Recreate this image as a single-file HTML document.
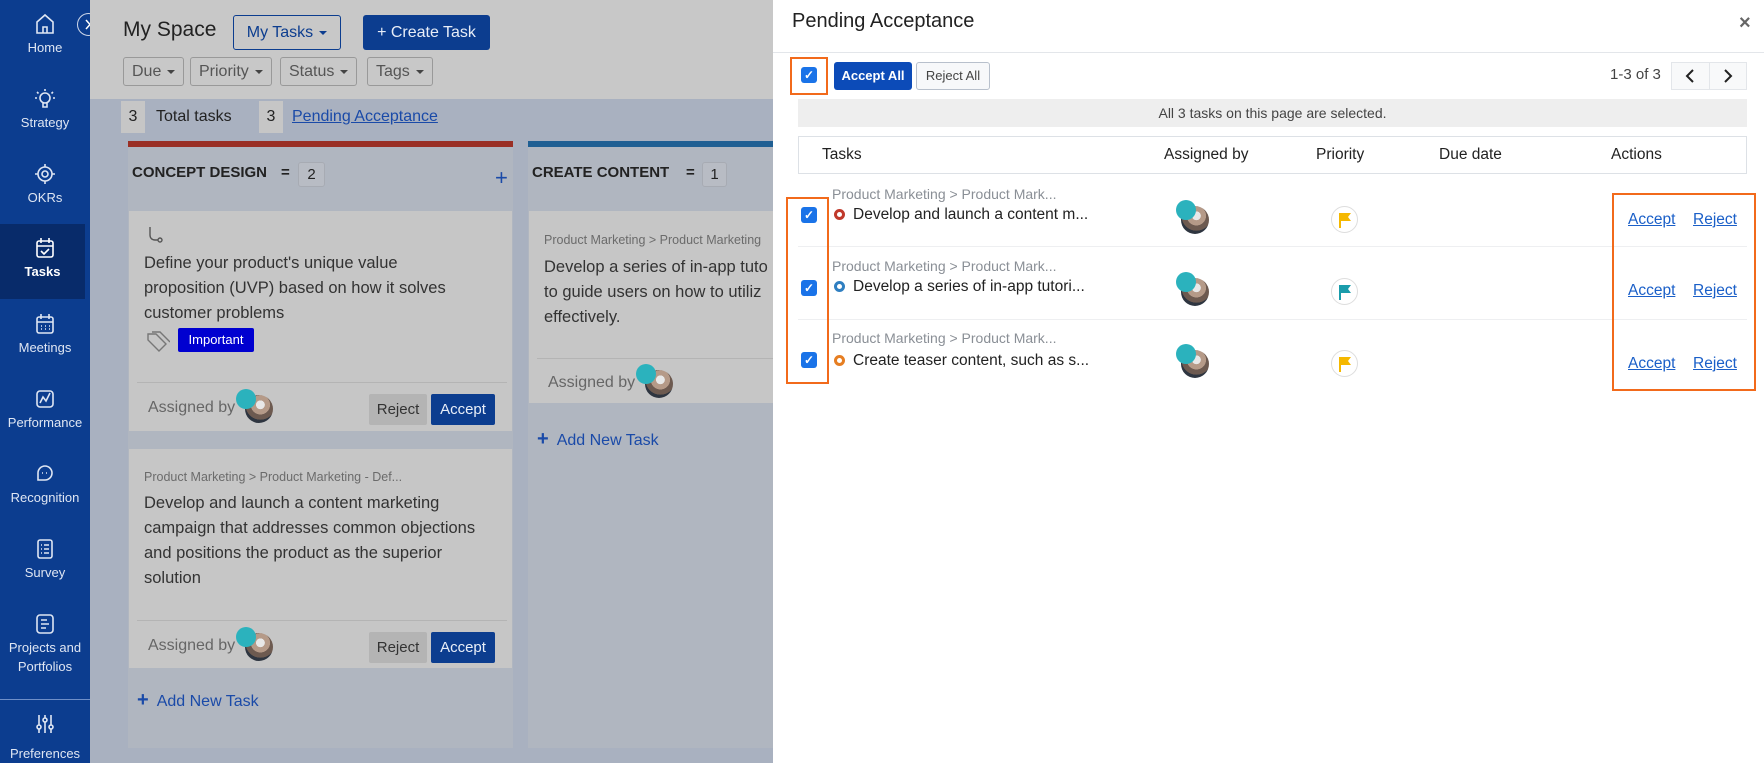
<!DOCTYPE html>
<html><head><meta charset="utf-8"><style>
*{box-sizing:border-box;margin:0;padding:0}
html{width:1764px;height:763px;overflow:hidden;background:#a9b1c0}
body{width:1764px;height:763px;overflow:hidden;font-family:"Liberation Sans",sans-serif;position:relative;background:#a9b1c0;color:#222}
.abs{position:absolute}
.side{left:0;top:0;width:90px;height:763px;background:#0c3d8f}
.item{position:absolute;left:0;width:90px;height:75px;color:#dfe6f3;font-size:13px;text-align:center}
.item svg{position:absolute;left:35px;top:13px}
.item span{position:absolute;left:0;right:0;top:38px;line-height:19px}
.hdr{left:90px;top:0;width:683px;height:99px;background:#c8c8c8}
.btn{position:absolute;border:1px solid #999;border-radius:3px;font-size:16px;color:#555;padding:0 8px;line-height:27px;background:#c8c8c8}
.car{display:inline-block;border-left:4px solid transparent;border-right:4px solid transparent;border-top:4px solid #444;vertical-align:middle;margin-left:6px}
.col{background:#b0b6c0}
.card{position:absolute;background:#c6c6c6}
.txt{font-size:16.5px;line-height:25px;color:#333;white-space:nowrap}
.bc{font-size:12.5px;color:#6b6b6b;white-space:nowrap}
.av{position:absolute;width:28px;height:28px;border-radius:50%;background:radial-gradient(circle at 55% 35%,#e8e8e8 0 18%,#b59a88 19% 40%,#6d5a50 41% 62%,#2e3540 63%)}
.av i{position:absolute;left:-9px;top:-6px;width:20px;height:20px;border-radius:50%;background:#2bb2bd}
.panel{left:773px;top:0;width:991px;height:763px;background:#fff}
.cb{position:absolute;width:16px;height:16px;border-radius:3px;background:#1a73e8;color:#fff;font-size:12px;line-height:16px;text-align:center;font-weight:bold}
.ob{position:absolute;border:2px solid #f26a1b}
.th{position:absolute;top:146px;font-size:15.5px;color:#222}
.lnk{position:absolute;color:#1a5fc8;text-decoration:underline;font-size:15.5px}
.dot{display:inline-block;width:11px;height:11px;border-radius:50%;border:3px solid;vertical-align:-1px;margin-right:8px}
.flag{position:absolute;width:27px;height:27px;border:1px solid #ddd;border-radius:50%}
</style></head><body>
<div class="abs side">
 <div class="item" style="top:0"><svg width="20" height="22" viewBox="0 0 20 22" fill="none" stroke="#dfe6f3" stroke-width="1.6"><path d="M2 9L10 2l8 7v11H2z"/><path d="M8 20v-6h4v6"/></svg><span>Home</span></div>
 <div class="item" style="top:75px"><svg width="20" height="22" viewBox="0 0 20 22" fill="none" stroke="#dfe6f3" stroke-width="1.6"><circle cx="10" cy="10" r="5"/><path d="M8 15v4h4v-4M10 1v2M2 4l1.5 1.5M18 4l-1.5 1.5M0 10h2M18 10h2"/></svg><span>Strategy</span></div>
 <div class="item" style="top:150px"><svg width="20" height="22" viewBox="0 0 20 22" fill="none" stroke="#dfe6f3" stroke-width="1.6"><circle cx="10" cy="11" r="7"/><circle cx="10" cy="11" r="3"/><path d="M10 1v3M10 18v3M0 11h3M17 11h3"/></svg><span>OKRs</span></div>
 <div class="item" style="top:224px;background:#082b6a;width:85px;color:#fff;font-weight:bold"><svg width="20" height="22" viewBox="0 0 20 22" fill="none" stroke="#fff" stroke-width="1.6"><rect x="2" y="4" width="16" height="16" rx="2"/><path d="M2 9h16M6 1v5M14 1v5M6 14l3 3 5-5"/></svg><span>Tasks</span></div>
 <div class="item" style="top:300px"><svg width="20" height="22" viewBox="0 0 20 22" fill="none" stroke="#dfe6f3" stroke-width="1.6"><rect x="2" y="4" width="16" height="16" rx="2"/><path d="M2 9h16M6 1v5M14 1v5M6 13h1M10 13h1M14 13h1M6 16h1M10 16h1M14 16h1"/></svg><span>Meetings</span></div>
 <div class="item" style="top:375px"><svg width="20" height="22" viewBox="0 0 20 22" fill="none" stroke="#dfe6f3" stroke-width="1.6"><rect x="2" y="3" width="16" height="16" rx="3"/><path d="M5 15l3-6 3 4 4-8"/></svg><span>Performance</span></div>
 <div class="item" style="top:450px"><svg width="20" height="22" viewBox="0 0 20 22" fill="none" stroke="#dfe6f3" stroke-width="1.6"><path d="M3 17V10a7 7 0 1 1 7 7z"/><path d="M7 10h1M11 10h1"/></svg><span>Recognition</span></div>
 <div class="item" style="top:525px"><svg width="20" height="22" viewBox="0 0 20 22" fill="none" stroke="#dfe6f3" stroke-width="1.6"><rect x="3" y="2" width="14" height="18" rx="2"/><path d="M6 7h1M9 7h5M6 11h1M9 11h5M6 15h1M9 15h5"/></svg><span>Survey</span></div>
 <div class="item" style="top:600px"><svg width="20" height="22" viewBox="0 0 20 22" fill="none" stroke="#dfe6f3" stroke-width="1.6"><rect x="2" y="2" width="16" height="18" rx="3"/><path d="M6 7h6M6 11h8M6 15h5"/></svg><span>Projects and<br>Portfolios</span></div>
 <div class="abs" style="left:0;top:699px;width:90px;height:1px;background:#6f8fc8"></div>
 <div class="item" style="top:700px"><svg width="20" height="22" viewBox="0 0 20 22" fill="none" stroke="#dfe6f3" stroke-width="1.6"><path d="M4 2v18M10 2v18M16 2v18"/><circle cx="4" cy="14" r="2" fill="#0c3d8f"/><circle cx="10" cy="7" r="2" fill="#0c3d8f"/><circle cx="16" cy="14" r="2" fill="#0c3d8f"/></svg><span style="top:44px">Preferences</span></div>
</div>
<div class="abs" style="left:77px;top:13px;width:23px;height:23px;border-radius:50%;background:#0c3d8f;border:1.5px solid #cfd8ea"><svg style="position:absolute;left:6px;top:5px" width="8" height="11" viewBox="0 0 8 11" fill="none" stroke="#fff" stroke-width="1.5"><path d="M2 1l4 4.5L2 10"/></svg></div>
<div class="abs hdr"></div>
<div class="abs" style="left:123px;top:18px;font-size:21px;color:#222">My Space</div>
<div class="btn" style="left:233px;top:15px;height:35px;line-height:33px;border-color:#0c3d8f;color:#0c3d8f;width:108px;text-align:center">My Tasks<span class="car" style="border-top-color:#0c3d8f"></span></div>
<div class="btn" style="left:363px;top:15px;height:35px;line-height:35px;border:none;background:#0c3d8f;color:#e8eef8;width:127px;text-align:center">+ Create Task</div>
<div class="btn" style="left:123px;top:57px;height:29px">Due<span class="car"></span></div>
<div class="btn" style="left:190px;top:57px;height:29px">Priority<span class="car"></span></div>
<div class="btn" style="left:280px;top:57px;height:29px">Status<span class="car"></span></div>
<div class="btn" style="left:367px;top:57px;height:29px">Tags<span class="car"></span></div>
<div class="abs" style="left:121px;top:101px;width:24px;height:32px;background:#c6c6c6;font-size:16px;line-height:32px;text-align:center">3</div>
<div class="abs" style="left:156px;top:101px;font-size:16px;line-height:32px">Total tasks</div>
<div class="abs" style="left:259px;top:101px;width:24px;height:32px;background:#c6c6c6;font-size:16px;line-height:32px;text-align:center">3</div>
<div class="abs" style="left:292px;top:101px;font-size:16px;line-height:32px;color:#1a4aa8;text-decoration:underline">Pending Acceptance</div>

<div class="abs col" style="left:128px;top:141px;width:385px;height:607px;border-top:6px solid #9a2f25"></div>
<div class="abs" style="left:132px;top:164px;font-size:15px;font-weight:bold">CONCEPT DESIGN</div>
<div class="abs" style="left:281px;top:164px;font-size:15px;font-weight:bold">=</div>
<div class="abs" style="left:298px;top:162px;width:27px;height:25px;border:1px solid #a7abb3;border-radius:3px;background:#b8bcc4;text-align:center;line-height:23px;font-size:15px">2</div>
<div class="abs" style="left:495px;top:165px;font-size:22px;color:#1a4aa8">+</div>
<div class="card" style="left:129px;top:211px;width:383px;height:220px"></div>
<svg class="abs" style="left:147px;top:226px" width="16" height="18" viewBox="0 0 16 18" fill="none" stroke="#555" stroke-width="1.4"><path d="M3 1v8c0 3 2 5 5 5h3"/><circle cx="13" cy="14" r="2"/></svg>
<div class="abs txt" style="left:144px;top:251px">Define your product's unique value<br>proposition (UVP) based on how it solves<br>customer problems</div>
<svg class="abs" style="left:146px;top:331px" width="24" height="22" viewBox="0 0 24 22" fill="none" stroke="#777" stroke-width="1.4"><path d="M2 3l8 0 10 10-7 7-11-11z"/><path d="M6 1l8 0 10 10"/></svg>
<div class="abs" style="left:178px;top:328px;width:76px;height:24px;background:#0000d0;border-radius:2px;color:#fff;font-size:13px;line-height:24px;text-align:center">Important</div>
<div class="abs" style="left:137px;top:382px;width:370px;height:1px;background:#b4b4b4"></div>
<div class="abs" style="left:148px;top:399px;font-size:16px;color:#666">Assigned by</div>
<div class="av" style="left:245px;top:395px"><i></i></div>
<div class="abs" style="left:369px;top:394px;width:58px;height:31px;background:#b4b4b4;border-radius:2px;text-align:center;line-height:31px;font-size:15px;color:#333">Reject</div>
<div class="abs" style="left:431px;top:394px;width:64px;height:31px;background:#0c3d8f;border-radius:2px;text-align:center;line-height:31px;font-size:15px;color:#e8eef8">Accept</div>

<div class="card" style="left:129px;top:449px;width:383px;height:219px"></div>
<div class="abs bc" style="left:144px;top:470px">Product Marketing &gt; Product Marketing - Def...</div>
<div class="abs txt" style="left:144px;top:491px">Develop and launch a content marketing<br>campaign that addresses common objections<br>and positions the product as the superior<br>solution</div>
<div class="abs" style="left:137px;top:620px;width:370px;height:1px;background:#b4b4b4"></div>
<div class="abs" style="left:148px;top:637px;font-size:16px;color:#666">Assigned by</div>
<div class="av" style="left:245px;top:633px"><i></i></div>
<div class="abs" style="left:369px;top:632px;width:58px;height:31px;background:#b4b4b4;border-radius:2px;text-align:center;line-height:31px;font-size:15px;color:#333">Reject</div>
<div class="abs" style="left:431px;top:632px;width:64px;height:31px;background:#0c3d8f;border-radius:2px;text-align:center;line-height:31px;font-size:15px;color:#e8eef8">Accept</div>
<div class="abs" style="left:137px;top:689px;font-size:16px;color:#1a4aa8"><b style="font-size:20px">+</b>&nbsp; Add New Task</div>

<div class="abs col" style="left:528px;top:141px;width:250px;height:607px;border-top:6px solid #1f5f93"></div>
<div class="abs" style="left:532px;top:164px;font-size:15px;font-weight:bold">CREATE CONTENT</div>
<div class="abs" style="left:686px;top:164px;font-size:15px;font-weight:bold">=</div>
<div class="abs" style="left:702px;top:162px;width:25px;height:25px;border:1px solid #a7abb3;border-radius:3px;background:#b8bcc4;text-align:center;line-height:23px;font-size:15px">1</div>
<div class="card" style="left:529px;top:211px;width:250px;height:192px"></div>
<div class="abs bc" style="left:544px;top:233px">Product Marketing &gt; Product Marketing</div>
<div class="abs txt" style="left:544px;top:255px">Develop a series of in-app tuto<br>to guide users on how to utiliz<br>effectively.</div>
<div class="abs" style="left:537px;top:358px;width:240px;height:1px;background:#b4b4b4"></div>
<div class="abs" style="left:548px;top:374px;font-size:16px;color:#666">Assigned by</div>
<div class="av" style="left:645px;top:370px"><i></i></div>
<div class="abs" style="left:537px;top:428px;font-size:16px;color:#1a4aa8"><b style="font-size:20px">+</b>&nbsp; Add New Task</div>

<div class="abs panel"></div>
<div class="abs" style="left:792px;top:10px;font-size:20px;color:#222">Pending Acceptance</div>
<div class="abs" style="left:1739px;top:12px;font-size:20px;color:#666;font-weight:bold">×</div>
<div class="abs" style="left:773px;top:52px;width:991px;height:1px;background:#e3e6ea"></div>
<div class="ob" style="left:790px;top:57px;width:38px;height:38px"></div>
<div class="cb" style="left:801px;top:67px">✓</div>
<div class="abs" style="left:834px;top:62px;width:78px;height:28px;background:#0c4bb8;border-radius:3px;color:#fff;font-size:13px;font-weight:bold;line-height:28px;text-align:center">Accept All</div>
<div class="abs" style="left:916px;top:62px;width:74px;height:28px;border:1px solid #b8c0cc;border-radius:3px;color:#444;font-size:13px;line-height:26px;text-align:center;background:#f7f8fa">Reject All</div>
<div class="abs" style="left:1610px;top:66px;font-size:15px;color:#444">1-3 of 3</div>
<div class="abs" style="left:1671px;top:62px;width:76px;height:28px;border:1px solid #e3e6ea;background:#f8f9fa"></div>
<div class="abs" style="left:1709px;top:62px;width:1px;height:28px;background:#e3e6ea"></div>
<svg class="abs" style="left:1684px;top:68px" width="12" height="16" viewBox="0 0 12 16" fill="none" stroke="#222" stroke-width="2"><path d="M9 2L3 8l6 6"/></svg>
<svg class="abs" style="left:1722px;top:68px" width="12" height="16" viewBox="0 0 12 16" fill="none" stroke="#222" stroke-width="2"><path d="M3 2l6 6-6 6"/></svg>
<div class="abs" style="left:798px;top:99px;width:949px;height:28px;background:#eeeeee;text-align:center;font-size:14px;line-height:28px;color:#444">All 3 tasks on this page are selected.</div>
<div class="abs" style="left:798px;top:136px;width:949px;height:38px;border:1px solid #dde1e6"></div>
<div class="th" style="left:822px">Tasks</div>
<div class="th" style="left:1164px">Assigned by</div>
<div class="th" style="left:1316px">Priority</div>
<div class="th" style="left:1439px">Due date</div>
<div class="th" style="left:1611px">Actions</div>
<div class="abs" style="left:798px;top:246px;width:949px;height:1px;background:#eeeff1"></div>
<div class="abs" style="left:798px;top:319px;width:949px;height:1px;background:#eeeff1"></div>
<div class="ob" style="left:786px;top:197px;width:43px;height:187px"></div>
<div class="ob" style="left:1612px;top:193px;width:144px;height:198px"></div>

<div class="cb" style="left:801px;top:207px">✓</div>
<div class="abs bc" style="left:832px;top:186px;color:#8a8f96;font-size:14px">Product Marketing &gt; Product Mark...</div>
<div class="abs" style="left:834px;top:206px;font-size:15.5px"><span class="dot" style="border-color:#c0392b"></span>Develop and launch a content m...</div>
<div class="av" style="left:1181px;top:206px"><i style="left:-5px"></i></div>
<div class="flag" style="left:1331px;top:206px"><svg style="position:absolute;left:7px;top:5px" width="13" height="16" viewBox="0 0 13 16"><path d="M1 1v15" stroke="#f5b800" stroke-width="2"/><path d="M2 1h10l-3 4 3 4H2z" fill="#f5b800"/></svg></div>
<div class="lnk" style="left:1628px;top:211px">Accept</div>
<div class="lnk" style="left:1693px;top:211px">Reject</div>

<div class="cb" style="left:801px;top:280px">✓</div>
<div class="abs bc" style="left:832px;top:258px;color:#8a8f96;font-size:14px">Product Marketing &gt; Product Mark...</div>
<div class="abs" style="left:834px;top:278px;font-size:15.5px"><span class="dot" style="border-color:#2f7fc1"></span>Develop a series of in-app tutori...</div>
<div class="av" style="left:1181px;top:278px"><i style="left:-5px"></i></div>
<div class="flag" style="left:1331px;top:278px"><svg style="position:absolute;left:7px;top:5px" width="13" height="16" viewBox="0 0 13 16"><path d="M1 1v15" stroke="#1a9cab" stroke-width="2"/><path d="M2 1h10l-3 4 3 4H2z" fill="#1a9cab"/></svg></div>
<div class="lnk" style="left:1628px;top:282px">Accept</div>
<div class="lnk" style="left:1693px;top:282px">Reject</div>

<div class="cb" style="left:801px;top:352px">✓</div>
<div class="abs bc" style="left:832px;top:330px;color:#8a8f96;font-size:14px">Product Marketing &gt; Product Mark...</div>
<div class="abs" style="left:834px;top:352px;font-size:15.5px"><span class="dot" style="border-color:#e67e22"></span>Create teaser content, such as s...</div>
<div class="av" style="left:1181px;top:350px"><i style="left:-5px"></i></div>
<div class="flag" style="left:1331px;top:350px"><svg style="position:absolute;left:7px;top:5px" width="13" height="16" viewBox="0 0 13 16"><path d="M1 1v15" stroke="#f5b800" stroke-width="2"/><path d="M2 1h10l-3 4 3 4H2z" fill="#f5b800"/></svg></div>
<div class="lnk" style="left:1628px;top:355px">Accept</div>
<div class="lnk" style="left:1693px;top:355px">Reject</div>
</body></html>
